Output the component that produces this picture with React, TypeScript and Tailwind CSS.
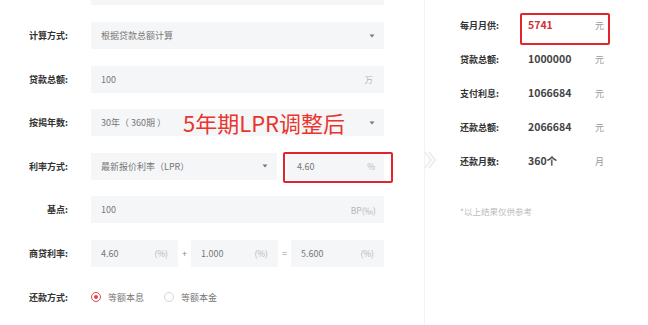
import React from "react";

const font = { fontFamily: '"Noto Sans CJK SC", "Noto Sans", sans-serif' };

function Arrow() {
  return (
    <svg width="6" height="4" viewBox="0 0 6 4" className="shrink-0">
      <path d="M0.5 0.5 L5.5 0.5 L3 3.5 Z" fill="#777" />
    </svg>
  );
}

function Label({ children }: { children: React.ReactNode }) {
  return (
    <div className="w-[68px] shrink-0 text-right text-[9px] font-bold leading-none text-[#333]">
      {children}
    </div>
  );
}

function Row({ label, children }: { label: string; children: React.ReactNode }) {
  return (
    <div className="flex h-[27px] items-center">
      <Label>{label}</Label>
      <div className="ml-[23px] flex h-full items-center">{children}</div>
    </div>
  );
}

function Box({
  w,
  text,
  unit,
  select,
  children,
  extraRight,
}: {
  w: string;
  text: string;
  unit?: string;
  select?: boolean;
  children?: React.ReactNode;
  extraRight?: string;
}) {
  return (
    <div
      className={`relative flex h-[27px] items-center justify-between bg-[#f5f6f8] pl-[10px] ${w} ${
        extraRight ?? "pr-[9px]"
      }`}
    >
      <span className="whitespace-pre text-[9px] leading-none text-[#777]">{text}</span>
      {select ? <Arrow /> : <span className="text-[8.5px] leading-none text-[#b5b5b5]">{unit}</span>}
      {children}
    </div>
  );
}

function Result({
  label,
  value,
  unit,
  highlight,
}: {
  label: string;
  value: string;
  unit: string;
  highlight?: boolean;
}) {
  return (
    <div className="flex h-[34px] items-center">
      <div className="w-[68px] shrink-0 text-[9px] font-bold leading-none text-[#333]">{label}</div>
      <div className="relative flex h-full w-[67px] shrink-0 items-center">
        <span
          className={`text-[10.5px] font-bold leading-none ${
            highlight ? "text-[#d4303c]" : "text-[#444]"
          }`}
        >
          {value}
        </span>
        {highlight && (
          <div className="absolute left-[-8px] top-[5px] h-[32px] w-[90px] rounded-[2px] border-2 border-[#e2252b]" />
        )}
      </div>
      <div className="text-[9px] leading-none text-[#999]">{unit}</div>
    </div>
  );
}

export default function App() {
  return (
    <div className="flex h-[325px] w-[648px] overflow-hidden bg-white" style={font}>
      {/* left form */}
      <div className="w-[424px] shrink-0">
        <div className="ml-[91px] h-[5px] w-[293px] bg-[#f5f6f8]" />
        <div className="mt-[17px] flex flex-col gap-[16.6px]">
          <Row label="计算方式:">
            <Box w="w-[293px]" text="根据贷款总额计算" select />
          </Row>
          <Row label="贷款总额:">
            <Box w="w-[293px]" text="100" unit="万" extraRight="pr-[11px]" />
          </Row>
          <Row label="按揭年数:">
            <Box w="w-[293px]" text="30年（ 360期 ）" select>
              <span className="absolute left-[92px] top-[-1px] whitespace-nowrap text-[22px] leading-[29px] text-[#e8352e]">
                5年期LPR调整后
              </span>
            </Box>
          </Row>
          <Row label="利率方式:">
            <Box w="w-[186px]" text="最新报价利率（LPR）" select />
            <div className="relative ml-[10px]">
              <Box w="w-[97px]" text="4.60" unit="%" />
              <div className="absolute left-[-4px] top-[-1px] h-[31px] w-[110px] rounded-[2px] border-2 border-[#e2252b]" />
            </div>
          </Row>
          <Row label="基点:">
            <Box w="w-[293px]" text="100" unit="BP(‰)" extraRight="pr-[8px]" />
          </Row>
          <Row label="商贷利率:">
            <Box w="w-[87px]" text="4.60" unit="(%)" extraRight="pr-[10px]" />
            <span className="w-[13px] text-center text-[9px] leading-none text-[#888]">+</span>
            <Box w="w-[87px]" text="1.000" unit="(%)" extraRight="pr-[10px]" />
            <span className="w-[13px] text-center text-[9px] leading-none text-[#888]">=</span>
            <Box w="w-[93px]" text="5.600" unit="(%)" extraRight="pr-[10px]" />
          </Row>
          <Row label="还款方式:">
            <div className="flex items-center">
              <span className="flex h-[10px] w-[10px] items-center justify-center rounded-full border border-[#e0474c]">
                <span className="h-[4px] w-[4px] rounded-full bg-[#e0474c]" />
              </span>
              <span className="ml-[7px] text-[9px] leading-none text-[#777]">等额本息</span>
              <span className="ml-[20px] h-[10px] w-[10px] rounded-full border border-[#d5d5d5]" />
              <span className="ml-[7px] text-[9px] leading-none text-[#777]">等额本金</span>
            </div>
          </Row>
        </div>
      </div>

      {/* right results */}
      <div className="relative flex-1 border-l border-[#f3f3f3] pl-[35px] pt-[8px]">
        <svg
          className="absolute left-[-2px] top-[151px]"
          width="14"
          height="18"
          viewBox="0 0 14 18"
        >
          <path d="M2 1 L8 9 L2 17" fill="none" stroke="#eeeeee" strokeWidth="2" />
          <path d="M6 1 L12 9 L6 17" fill="none" stroke="#eeeeee" strokeWidth="2" />
        </svg>
        <Result label="每月月供:" value="5741" unit="元" highlight />
        <Result label="贷款总额:" value="1000000" unit="元" />
        <Result label="支付利息:" value="1066684" unit="元" />
        <Result label="还款总额:" value="2066684" unit="元" />
        <Result label="还款月数:" value="360个" unit="月" />
        <div className="mt-[29px] text-[8.5px] leading-none text-[#bdbdbd]">*以上结果仅供参考</div>
      </div>
    </div>
  );
}
